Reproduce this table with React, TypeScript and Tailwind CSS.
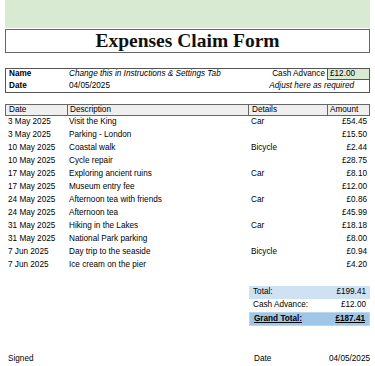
const rows = [
  { date: "3 May 2025", desc: "Visit the King", details: "Car", amount: "£54.45" },
  { date: "3 May 2025", desc: "Parking - London", details: "", amount: "£15.50" },
  { date: "10 May 2025", desc: "Coastal walk", details: "Bicycle", amount: "£2.44" },
  { date: "10 May 2025", desc: "Cycle repair", details: "", amount: "£28.75" },
  { date: "17 May 2025", desc: "Exploring ancient ruins", details: "Car", amount: "£8.10" },
  { date: "17 May 2025", desc: "Museum entry fee", details: "", amount: "£12.00" },
  { date: "24 May 2025", desc: "Afternoon tea with friends", details: "Car", amount: "£0.86" },
  { date: "24 May 2025", desc: "Afternoon tea", details: "", amount: "£45.99" },
  { date: "31 May 2025", desc: "Hiking in the Lakes", details: "Car", amount: "£18.18" },
  { date: "31 May 2025", desc: "National Park parking", details: "", amount: "£8.00" },
  { date: "7 Jun 2025", desc: "Day trip to the seaside", details: "Bicycle", amount: "£0.94" },
  { date: "7 Jun 2025", desc: "Ice cream on the pier", details: "", amount: "£4.20" },
]

const cols = "grid grid-cols-[62px_181px_79px_42px]"

export default function App() {
  return (
    <div className="w-[375px] h-[366px] bg-white px-[5px] text-[8.2px] leading-none text-black font-['Liberation_Sans',Arial,sans-serif] overflow-hidden">
      {/* header band */}
      <div className="h-[28px] bg-[#d9ead3]" />
      <div className="mt-[1px] h-[24px] border border-[#666] flex items-center justify-center">
        <h1 className="font-['Liberation_Serif',Georgia,serif] font-bold text-[19.5px] text-[#111]">
          Expenses Claim Form
        </h1>
      </div>

      {/* name / date box */}
      <div className="mt-[15px] border border-[#555]">
        <div className="flex h-[11px] items-center">
          <span className="w-[63px] pl-[3px] font-bold">Name</span>
          <span className="flex-1 italic">Change this in Instructions &amp; Settings Tab</span>
          <span className="pr-[2px]">Cash Advance</span>
          <span className="w-[42px] h-[11px] flex items-center pl-[2px] bg-[#d9ead3] border-l border-b border-[#555]">£12.00</span>
        </div>
        <div className="flex h-[12px] items-center">
          <span className="w-[63px] pl-[3px] font-bold">Date</span>
          <span className="flex-1">04/05/2025</span>
          <span className="pr-[15px] italic">Adjust here as required</span>
        </div>
      </div>

      {/* expenses table */}
      <div className="mt-[11px]">
        <div className={`${cols} h-[12px] bg-[#efefef] border border-[#666]`}>
          <div className="flex items-center pl-[3px] border-r border-[#666]">Date</div>
          <div className="flex items-center pl-[2px] border-r border-[#666]">Description</div>
          <div className="flex items-center pl-[3px] border-r border-[#666]">Details</div>
          <div className="flex items-center pl-[2px]">Amount</div>
        </div>
        {rows.map((r, i) => (
          <div key={i} className={`${cols} h-[13px] items-center`}>
            <div className="pl-[3px]">{r.date}</div>
            <div className="pl-[2px]">{r.desc}</div>
            <div className="pl-[3px]">{r.details}</div>
            <div className="text-right pr-[2px]">{r.amount}</div>
          </div>
        ))}
      </div>

      {/* totals */}
      <div className="mt-[14px] ml-auto w-[121px]">
        <div className="flex h-[13px] items-center justify-between px-[4px] bg-[#cfe2f3]">
          <span>Total:</span>
          <span>£199.41</span>
        </div>
        <div className="flex h-[13px] items-center justify-between px-[4px]">
          <span>Cash Advance:</span>
          <span>£12.00</span>
        </div>
        <div className="flex h-[14px] items-center justify-between px-[4px] bg-[#9fc5e8] border border-[#bcd6ee] font-bold">
          <span className="underline">Grand Total: </span>
          <span className="underline">£187.41</span>
        </div>
      </div>

      {/* signature */}
      <div className="mt-[27px] flex h-[12px] items-center">
        <span className="flex-1 pl-[3px]">Signed</span>
        <span className="w-[77px] pl-[5px]">Date</span>
        <span className="w-[44px] text-right">04/05/2025</span>
      </div>
    </div>
  )
}
